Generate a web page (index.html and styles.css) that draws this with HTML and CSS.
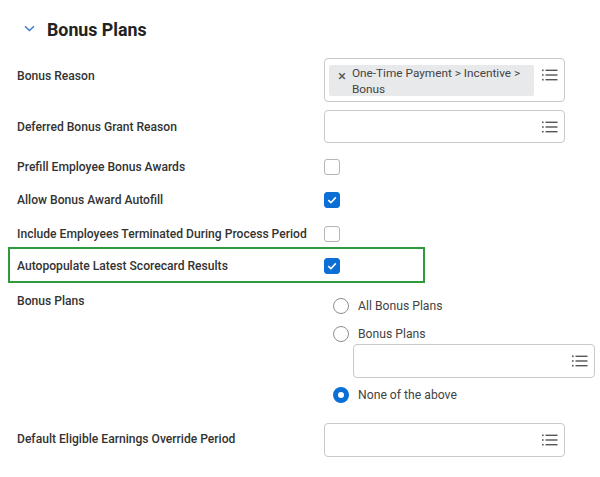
FILE: index.html
```html
<!DOCTYPE html>
<html>
<head>
<meta charset="utf-8">
<link rel="stylesheet" href="styles.css">
</head>
<body>
<div class="page">
  <div class="header">
    <svg class="chev" width="11" height="7" viewBox="0 0 11 7"><path d="M1 1.2 L5.5 5.5 L10 1.2" fill="none" stroke="#3a78c9" stroke-width="1.4"/></svg>
    <h2 class="title">Bonus Plans</h2>
  </div>

  <div class="row r-reason">
    <div class="label lbl-tall">Bonus Reason</div>
    <div class="field">
      <div class="input input-tall">
        <div class="pill">
          <span class="x">×</span>
          <span class="pill-text">One-Time Payment &gt; Incentive &gt; Bonus</span>
        </div>
        <svg class="list" width="16" height="12" viewBox="0 0 16 12"><g fill="#555"><rect x="0" y="0.5" width="1.6" height="1.6"/><rect x="0" y="5.2" width="1.6" height="1.6"/><rect x="0" y="9.9" width="1.6" height="1.6"/><rect x="3.5" y="0.6" width="12" height="1.4"/><rect x="3.5" y="5.3" width="12" height="1.4"/><rect x="3.5" y="10" width="12" height="1.4"/></g></svg>
      </div>
    </div>
  </div>

  <div class="row r-deferred">
    <div class="label lbl-box">Deferred Bonus Grant Reason</div>
    <div class="field">
      <div class="input">
        <svg class="list" width="16" height="12" viewBox="0 0 16 12"><g fill="#555"><rect x="0" y="0.5" width="1.6" height="1.6"/><rect x="0" y="5.2" width="1.6" height="1.6"/><rect x="0" y="9.9" width="1.6" height="1.6"/><rect x="3.5" y="0.6" width="12" height="1.4"/><rect x="3.5" y="5.3" width="12" height="1.4"/><rect x="3.5" y="10" width="12" height="1.4"/></g></svg>
      </div>
    </div>
  </div>

  <div class="row cb-row first">
    <div class="label">Prefill Employee Bonus Awards</div>
    <div class="field"><span class="cb"></span></div>
  </div>
  <div class="row cb-row">
    <div class="label">Allow Bonus Award Autofill</div>
    <div class="field"><span class="cb checked"><svg width="16" height="16" viewBox="0 0 16 16"><path d="M4.3 8.2 L6.9 10.7 L11.8 5.4" fill="none" stroke="#fff" stroke-width="1.6"/></svg></span></div>
  </div>
  <div class="row cb-row">
    <div class="label">Include Employees Terminated During Process Period</div>
    <div class="field"><span class="cb"></span></div>
  </div>
  <div class="row cb-row highlight">
    <div class="label">Autopopulate Latest Scorecard Results</div>
    <div class="field"><span class="cb checked"><svg width="16" height="16" viewBox="0 0 16 16"><path d="M4.3 8.2 L6.9 10.7 L11.8 5.4" fill="none" stroke="#fff" stroke-width="1.6"/></svg></span></div>
  </div>

  <div class="row r-plans">
    <div class="label">Bonus Plans</div>
    <div class="field">
      <div class="radios">
        <div class="radio-row"><span class="radio"></span><span class="rtext">All Bonus Plans</span></div>
        <div class="radio-row"><span class="radio"></span><span class="rtext">Bonus Plans</span></div>
        <div class="input sub-input">
          <svg class="list" width="16" height="12" viewBox="0 0 16 12"><g fill="#555"><rect x="0" y="0.5" width="1.6" height="1.6"/><rect x="0" y="5.2" width="1.6" height="1.6"/><rect x="0" y="9.9" width="1.6" height="1.6"/><rect x="3.5" y="0.6" width="12" height="1.4"/><rect x="3.5" y="5.3" width="12" height="1.4"/><rect x="3.5" y="10" width="12" height="1.4"/></g></svg>
        </div>
        <div class="radio-row last"><span class="radio on"></span><span class="rtext">None of the above</span></div>
      </div>
    </div>
  </div>

  <div class="row r-default">
    <div class="label lbl-box">Default Eligible Earnings Override Period</div>
    <div class="field">
      <div class="input">
        <svg class="list" width="16" height="12" viewBox="0 0 16 12"><g fill="#555"><rect x="0" y="0.5" width="1.6" height="1.6"/><rect x="0" y="5.2" width="1.6" height="1.6"/><rect x="0" y="9.9" width="1.6" height="1.6"/><rect x="3.5" y="0.6" width="12" height="1.4"/><rect x="3.5" y="5.3" width="12" height="1.4"/><rect x="3.5" y="10" width="12" height="1.4"/></g></svg>
      </div>
    </div>
  </div>
</div>
</body>
</html>
```

FILE: styles.css
```css
* { box-sizing: border-box; }
html, body { margin: 0; padding: 0; background: #fff; }
body {
  font-family: Roboto, "Liberation Sans", sans-serif;
  color: #333;
  width: 600px;
  height: 477px;
  overflow: hidden;
}
.page { padding-left: 17px; }

.header {
  display: flex;
  align-items: center;
  height: 24px;
  margin-top: 18px;
}
.chev { margin-left: 7px; margin-top: -3px; }
.title {
  margin: 0 0 0 12px;
  font-size: 17.8px;
  font-weight: 700;
  line-height: 24px;
  color: #222;
}

.row {
  display: grid;
  grid-template-columns: 307px 241px;
  align-items: start;
}
.label {
  font-size: 12.1px;
  font-weight: 500;
  line-height: 20px;
  color: #333;
  white-space: nowrap;
}
.lbl-tall { padding-top: 7.5px; }
.lbl-box { padding-top: 6.5px; }

.r-reason { margin-top: 16px; }
.r-deferred { margin-top: 8px; }

.input {
  position: relative;
  height: 33px;
  border: 1px solid #c9c9c9;
  border-radius: 4px;
  background: #fff;
  display: flex;
  align-items: center;
  justify-content: flex-end;
  padding-right: 6px;
}
.input-tall {
  height: 44px;
  align-items: flex-start;
  justify-content: space-between;
  padding: 6px 6px 0 4px;
}
.pill {
  display: flex;
  align-items: flex-start;
  background: #e8e9ea;
  width: 205px;
  height: 31px;
  padding: 0 4px 0 9px;
  border-radius: 2px;
}
.x {
  font-size: 15px;
  line-height: 18px;
  color: #555;
  width: 16px;
  padding-top: 2px;
}
.pill-text {
  font-size: 11.8px;
  line-height: 16px;
  color: #444;
  padding-top: 0;
}
.input-tall .list { margin-top: 4px; }
.list { display: block; }

.cb-row { height: 20px; align-items: center; margin-top: 13.5px; }
.cb-row.first { margin-top: 13.5px; }
.cb-row .field { display: flex; align-items: center; }
.cb {
  display: block;
  width: 16px;
  height: 16px;
  border: 1px solid #b5b5b5;
  border-radius: 3px;
  background: #fff;
}
.cb.checked {
  background: #0b6fd6;
  border-color: #0b6fd6;
  position: relative;
}
.cb.checked svg { position: absolute; left: -1px; top: -1px; }

.highlight {
  height: auto;
  margin-top: 3px;
  margin-left: -9px;
  width: 417px;
  border: 2px solid #2f9a3b;
  padding: 7px 0 5px 7px;
  grid-template-columns: 307px 1fr;
}
.highlight .label, .highlight .field { height: 20px; }

.r-plans { margin-top: 8px; }
.radios { padding: 5.5px 0 0 9px; }
.radio-row {
  display: flex;
  align-items: center;
  height: 20px;
  margin-bottom: 8px;
}
.radio {
  width: 16px;
  height: 16px;
  border: 1px solid #8d8d8d;
  border-radius: 50%;
  background: #fff;
  flex: none;
}
.radio.on {
  border: 5px solid #0b6fd6;
}
.rtext {
  margin-left: 9px;
  font-size: 12.2px;
  color: #444;
  line-height: 20px;
}
.sub-input {
  margin-left: 20px;
  width: 242px;
  height: 34px;
  margin-top: -8.5px;
}
.radio-row.last { margin-top: 7px; margin-bottom: 0; }

.r-default { margin-top: 18px; }
.r-default .input { height: 34px; }
```
